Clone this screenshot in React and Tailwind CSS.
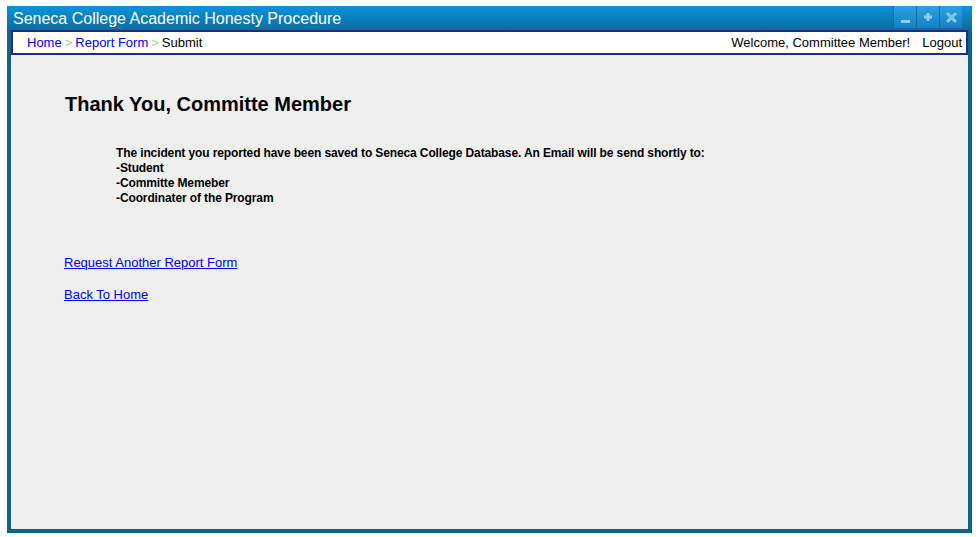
import React from "react";

const WinButton = ({ children }) => (
  <div className="w-[23px] h-[22px] bg-gradient-to-b from-[#2aa2e4] to-[#1580c2] border-l border-[#0c679c] flex items-center justify-center">
    {children}
  </div>
);

const App = () => {
  return (
    <div className="w-[980px] h-[537px] bg-white pt-[6px] pl-[7px] font-['Liberation_Sans',Arial,sans-serif]">
      <div className="w-[965px] h-[527px] flex flex-col bg-[#11628a] px-[4px] pb-[4px]">
        {/* title bar */}
        <div className="h-[24px] -mx-[4px] flex items-start bg-gradient-to-b from-[#0a94dc] to-[#0b6c9f]">
          <span className="pl-[6px] pt-[3px] text-[16px] leading-[19px] text-white">
            Seneca College Academic Honesty Procedure
          </span>
          <div className="ml-auto mr-[10px] flex">
            <WinButton>
              <div className="w-[9px] h-[3px] bg-[#8ccdf0] mt-[8px]" />
            </WinButton>
            <WinButton>
              <svg width="10" height="10" viewBox="0 0 10 10">
                <path d="M5 1v8M1 5h8" stroke="#8ccdf0" strokeWidth="3" />
              </svg>
            </WinButton>
            <WinButton>
              <svg width="11" height="11" viewBox="0 0 11 11">
                <path d="M2 2l7 7M9 2l-7 7" stroke="#8ccdf0" strokeWidth="3" strokeLinecap="round" />
                <path d="M2 2l7 7M9 2l-7 7" stroke="#6fb8e2" strokeWidth="1" />
              </svg>
            </WinButton>
          </div>
        </div>

        {/* nav bar */}
        <div className="h-[25px] bg-white border-2 border-[#1c2f7e] flex items-center text-[13px] text-black">
          <div className="pl-[14px] flex items-center">
            <a className="text-[#0000ff]">Home</a>
            <span className="text-[#9fc8b4] px-[3px]">&gt;</span>
            <a className="text-[#0000ff]">Report Form</a>
            <span className="text-[#9fc8b4] px-[3px]">&gt;</span>
            <span>Submit</span>
          </div>
          <div className="ml-auto pr-[4px] flex items-center gap-[12px]">
            <span>Welcome, Committee Member!</span>
            <span>Logout</span>
          </div>
        </div>

        {/* content */}
        <div className="flex-1 bg-[#efefef] pl-[54px] pt-[37px] text-black">
          <h1 className="text-[20px] font-bold leading-[24px]">Thank You, Committe Member</h1>
          <div className="mt-[30px] pl-[51px] text-[12px] font-bold leading-[15px] tracking-[-0.12px]">
            <div>The incident you reported have been saved to Seneca College Database. An Email will be send shortly to:</div>
            <div>-Student</div>
            <div>-Committe Memeber</div>
            <div>-Coordinater of the Program</div>
          </div>
          <div className="mt-[49px] -ml-px text-[13px] leading-[16px] flex flex-col gap-[16px] items-start">
            <a className="text-[#0000ff] underline">Request Another Report Form</a>
            <a className="text-[#0000ff] underline">Back To Home</a>
          </div>
        </div>
      </div>
    </div>
  );
};

export default App;
